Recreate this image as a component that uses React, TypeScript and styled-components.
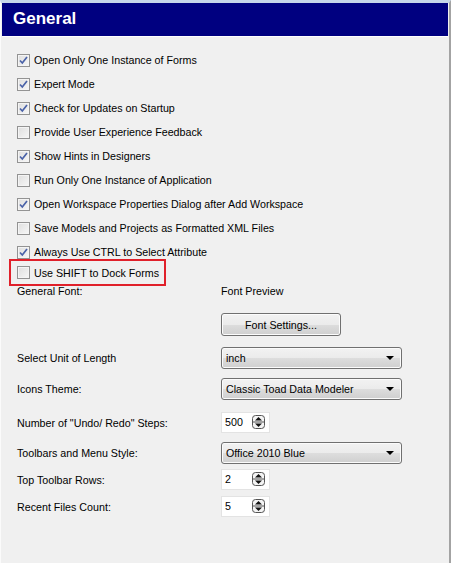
import React from "react";
import styled, { createGlobalStyle } from "styled-components";

const GlobalStyle = createGlobalStyle`
  html, body {
    margin: 0;
    padding: 0;
    background: #f0f0f0;
  }
  * {
    box-sizing: border-box;
  }
`;

const Frame = styled.div`
  width: 451px;
  height: 563px;
  background: #f0f0f0;
  border-top: 3px solid #c6d6ea;
  border-left: 1px solid #fbfbfb;
  border-right: 2px solid #a3a3a3;
  font-family: "Liberation Sans", Arial, sans-serif;
  font-size: 10.7px;
  color: #000;
  overflow: hidden;
`;

const Header = styled.div`
  height: 34px;
  margin-right: 1px;
  margin-left: 1px;
  background: #000080;
  border-bottom: 1px solid #ffffff;
  color: #fff;
  font-size: 17px;
  font-weight: bold;
  padding: 6px 0 0 11px;
`;

const Body = styled.div`
  padding: 11px 0 0 16px;
`;

const CheckList = styled.div`
  display: flex;
  flex-direction: column;
`;

const CheckRow = styled.label`
  display: flex;
  align-items: center;
  gap: 4px;
  height: 24px;
`;

const Highlight = styled.div`
  margin: -5px 0 0 -8px;
  width: 157px;
  height: 27px;
  border: 2px solid #e0202a;
  padding-left: 6px;
  display: flex;
  align-items: center;
`;

const Box = styled.span<{ $checked?: boolean }>`
  width: 13px;
  height: 13px;
  border: 1px solid #939393;
  background: linear-gradient(135deg, #dedede 0%, #f7f7f7 100%);
  box-shadow: inset 0 0 0 1px #f4f4f4;
  display: inline-flex;
  align-items: center;
  justify-content: center;
  flex: none;
`;

const Grid = styled.div`
  display: grid;
  grid-template-columns: 204px 1fr;
  align-items: center;
  margin-top: -1px;
`;

const Label = styled.div<{ $top?: number }>`
  margin-top: ${(p) => p.$top ?? 0}px;
  white-space: nowrap;
`;

const Cell = styled.div<{ $top?: number }>`
  margin-top: ${(p) => p.$top ?? 0}px;
  display: flex;
  align-items: center;
`;

const Button = styled.button`
  width: 120px;
  height: 23px;
  border: 1px solid #707070;
  border-radius: 3px;
  background: linear-gradient(#f2f2f2 0%, #ebebeb 50%, #dddddd 51%, #cfcfcf 100%);
  box-shadow: inset 0 0 0 1px #fcfcfc;
  font-family: inherit;
  font-size: 10.7px;
  color: #000;
  padding: 0;
`;

const Select = styled.div`
  width: 181px;
  height: 22px;
  border: 1px solid #707070;
  border-radius: 3px;
  background: linear-gradient(#f2f2f2 0%, #ebebeb 50%, #dddddd 51%, #cfcfcf 100%);
  box-shadow: inset 0 0 0 1px #fbfbfb;
  display: flex;
  align-items: center;
  justify-content: space-between;
  padding: 0 7px 0 4px;
`;

const Arrow = styled.span`
  width: 0;
  height: 0;
  border-left: 4px solid transparent;
  border-right: 4px solid transparent;
  border-top: 4px solid #000;
`;

const Spin = styled.div`
  width: 49px;
  height: 21px;
  background: #fff;
  border: 1px solid #e3e3e3;
  display: flex;
  align-items: center;
  justify-content: space-between;
  padding: 0 4px 1px 3px;
`;

const Check = () => (
  <svg width="11" height="11" viewBox="0 0 11 11">
    <path d="M2 5.5 L4.3 8 L9 2" fill="none" stroke="#4a62a8" strokeWidth="1.7" />
  </svg>
);

const SpinArrows = () => (
  <svg width="13" height="14" viewBox="0 0 13 14">
    <rect x="0.5" y="0.5" width="12" height="13" rx="3" fill="#f4f4f4" stroke="#555" />
    <line x1="1" y1="7" x2="12" y2="7" stroke="#555" />
    <path d="M3 5.5 L6.5 2 L10 5.5 Z" fill="#111" />
    <path d="M3 8.5 L6.5 12 L10 8.5 Z" fill="#111" />
  </svg>
);

const options: [string, boolean][] = [
  ["Open Only One Instance of Forms", true],
  ["Expert Mode", true],
  ["Check for Updates on Startup", true],
  ["Provide User Experience Feedback", false],
  ["Show Hints in Designers", true],
  ["Run Only One Instance of Application", false],
  ["Open Workspace Properties Dialog after Add Workspace", true],
  ["Save Models and Projects as Formatted XML Files", false],
  ["Always Use CTRL to Select Attribute", true],
];

export default function App() {
  return (
    <>
      <GlobalStyle />
      <Frame>
        <Header>General</Header>
        <Body>
          <CheckList>
            {options.map(([text, checked]) => (
              <CheckRow key={text}>
                <Box $checked={checked}>{checked && <Check />}</Box>
                {text}
              </CheckRow>
            ))}
            <Highlight>
              <CheckRow>
                <Box />
                Use SHIFT to Dock Forms
              </CheckRow>
            </Highlight>
          </CheckList>
          <Grid>
            <Label>General Font:</Label>
            <Cell>Font Preview</Cell>

            <Label />
            <Cell $top={16}>
              <Button>Font Settings...</Button>
            </Cell>

            <Label $top={11}>Select Unit of Length</Label>
            <Cell $top={11}>
              <Select>
                inch
                <Arrow />
              </Select>
            </Cell>

            <Label $top={9}>Icons Theme:</Label>
            <Cell $top={9}>
              <Select>
                Classic Toad Data Modeler
                <Arrow />
              </Select>
            </Cell>

            <Label $top={12}>Number of "Undo/ Redo" Steps:</Label>
            <Cell $top={12}>
              <Spin>
                500
                <SpinArrows />
              </Spin>
            </Cell>

            <Label $top={9}>Toolbars and Menu Style:</Label>
            <Cell $top={9}>
              <Select>
                Office 2010 Blue
                <Arrow />
              </Select>
            </Cell>

            <Label $top={5}>Top Toolbar Rows:</Label>
            <Cell $top={5}>
              <Spin>
                2
                <SpinArrows />
              </Spin>
            </Cell>

            <Label $top={6}>Recent Files Count:</Label>
            <Cell $top={6}>
              <Spin>
                5
                <SpinArrows />
              </Spin>
            </Cell>
          </Grid>
        </Body>
      </Frame>
    </>
  );
}
